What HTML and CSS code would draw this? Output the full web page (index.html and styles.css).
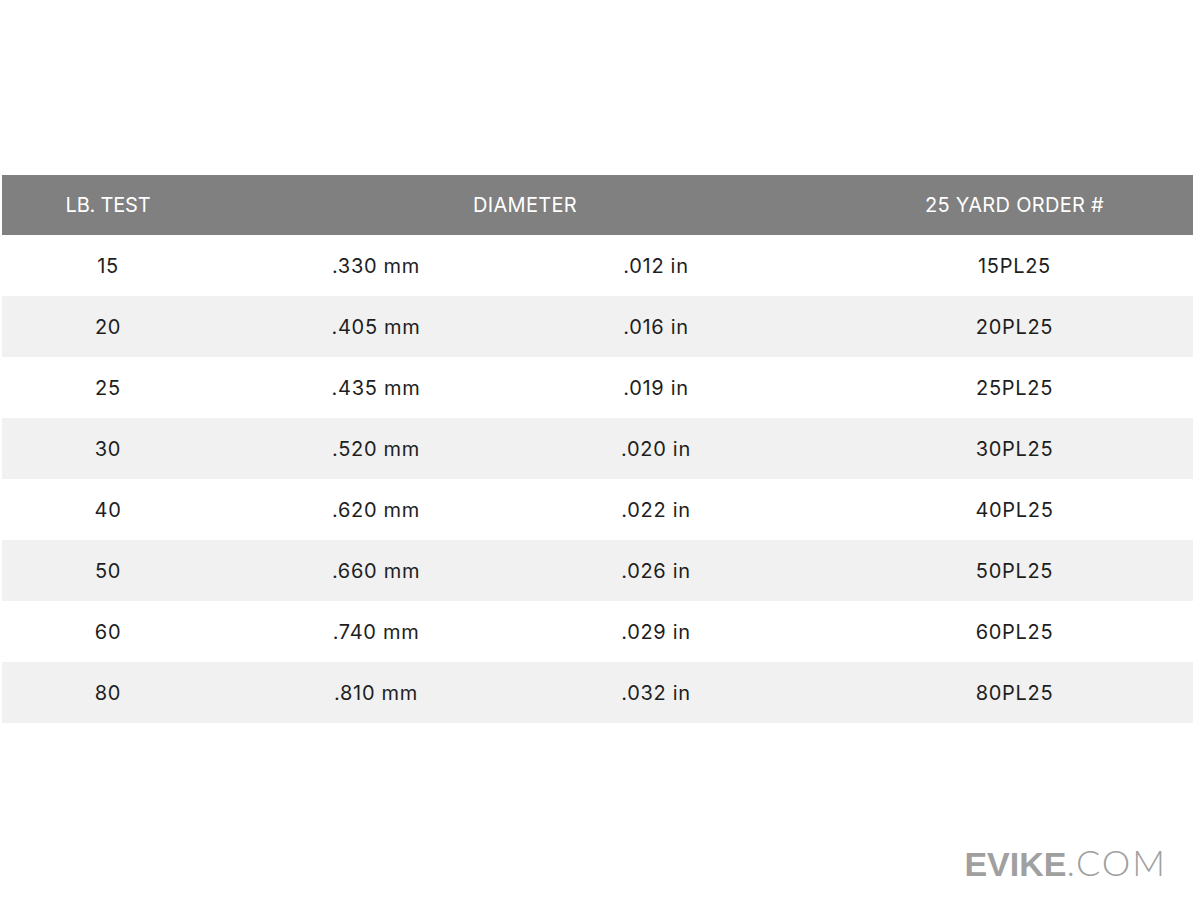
FILE: index.html
```html
<!DOCTYPE html>
<html>
<head>
<meta charset="utf-8">
<link rel="stylesheet" href="styles.css">
</head>
<body>
<div class="page">
  <div class="table">
    <div class="row head">
      <div class="cell c1">LB. TEST</div>
      <div class="cell span diam">DIAMETER</div>
      <div class="cell c4">25 YARD ORDER #</div>
    </div>
    <div class="row"><div class="cell c1">15</div><div class="cell c2">.330 mm</div><div class="cell c3">.012 in</div><div class="cell c4">15PL25</div></div>
    <div class="row alt"><div class="cell c1">20</div><div class="cell c2">.405 mm</div><div class="cell c3">.016 in</div><div class="cell c4">20PL25</div></div>
    <div class="row"><div class="cell c1">25</div><div class="cell c2">.435 mm</div><div class="cell c3">.019 in</div><div class="cell c4">25PL25</div></div>
    <div class="row alt"><div class="cell c1">30</div><div class="cell c2">.520 mm</div><div class="cell c3">.020 in</div><div class="cell c4">30PL25</div></div>
    <div class="row"><div class="cell c1">40</div><div class="cell c2">.620 mm</div><div class="cell c3">.022 in</div><div class="cell c4">40PL25</div></div>
    <div class="row alt"><div class="cell c1">50</div><div class="cell c2">.660 mm</div><div class="cell c3">.026 in</div><div class="cell c4">50PL25</div></div>
    <div class="row"><div class="cell c1">60</div><div class="cell c2">.740 mm</div><div class="cell c3">.029 in</div><div class="cell c4">60PL25</div></div>
    <div class="row alt"><div class="cell c1">80</div><div class="cell c2">.810 mm</div><div class="cell c3">.032 in</div><div class="cell c4">80PL25</div></div>
  </div>
  <div class="logo"><span class="bold">EVIKE</span><span class="thin">.COM</span></div>
</div>
</body>
</html>
```

FILE: styles.css
```css
html, body {
  margin: 0;
  padding: 0;
  background: #ffffff;
}
.page {
  width: 1200px;
  height: 900px;
  box-sizing: border-box;
  padding: 175px 7px 0 2px;
  display: flex;
  flex-direction: column;
  font-family: "Inter", "Open Sans", sans-serif;
}
.table {
  width: 1191px;
  display: flex;
  flex-direction: column;
}
.row {
  display: grid;
  grid-template-columns: 212px 324px 236px 419px;
  height: 61px;
  align-items: center;
  color: #1e1e1e;
  font-size: 20px;
  letter-spacing: 0.7px;
}
.row.head {
  height: 60px;
  background: #808080;
  color: #ffffff;
  font-size: 20px;
  letter-spacing: 0.3px;
}
.row.head .c1 {
  letter-spacing: -0.2px;
}
.row.alt {
  background: #f1f1f1;
}
.cell {
  text-align: center;
  white-space: nowrap;
}
.span {
  grid-column: 2 / 4;
}
.diam {
  padding-left: 62px;
}
.c4 {
  padding-left: 62px;
}
.logo {
  margin-top: 119px;
  align-self: flex-end;
  margin-right: 26px;
  color: #a0a0a0;
  font-size: 34px;
  line-height: 40px;
}
.logo .bold {
  font-family: "Liberation Sans", sans-serif;
  font-weight: 700;
}
.logo .thin {
  font-family: "Lato", "Open Sans", sans-serif;
  font-weight: 300;
  letter-spacing: 2px;
  font-size: 36px;
}
```
